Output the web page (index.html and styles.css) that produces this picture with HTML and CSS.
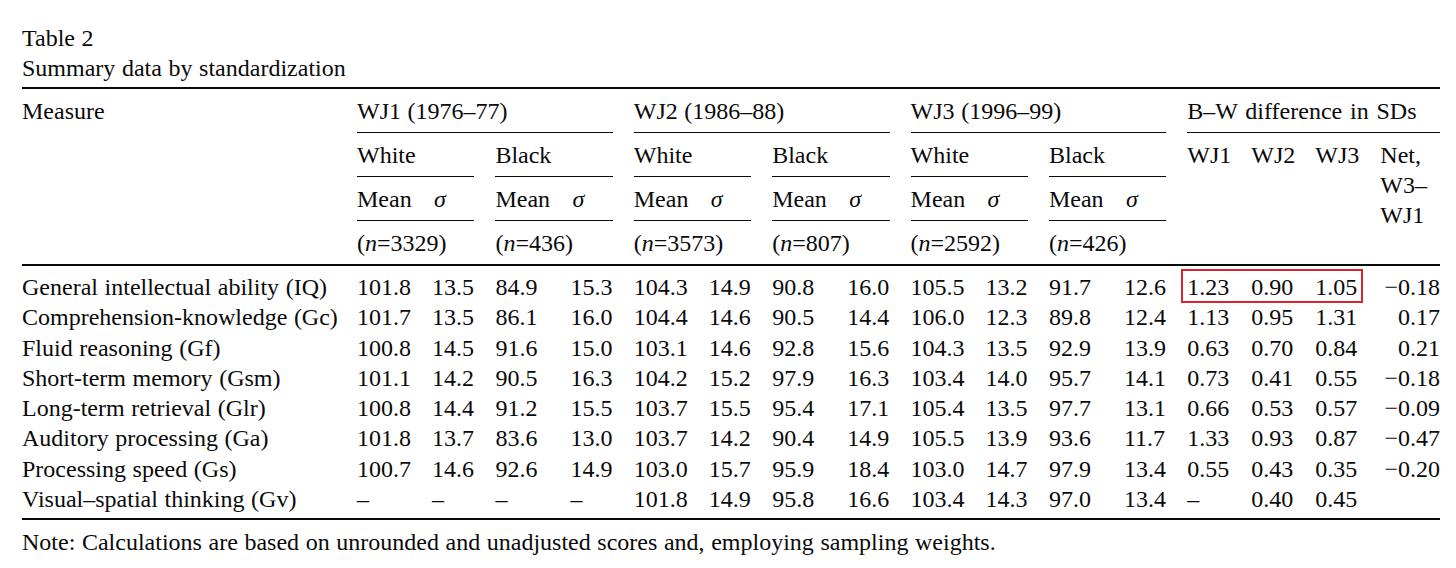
FILE: index.html
```html
<!DOCTYPE html>
<html lang="en">
<head>
<meta charset="utf-8">
<title>Table 2</title>
<link rel="stylesheet" href="styles.css">
</head>
<body>
<div class="page">
  <div class="caption">
    <div>Table 2</div>
    <div>Summary data by standardization</div>
  </div>

  <div class="head grid">
    <div class="hc measure">Measure</div>
    <div class="hc ul g1">WJ1 (1976–77)</div>
    <div class="hc ul g2">WJ2 (1986–88)</div>
    <div class="hc ul g3">WJ3 (1996–99)</div>
    <div class="hc ul g4 wide">B–W difference in SDs</div>

    <div class="hc ul r2 c2">White</div>
    <div class="hc ul r2 c3">Black</div>
    <div class="hc ul r2 c4">White</div>
    <div class="hc ul r2 c5">Black</div>
    <div class="hc ul r2 c6">White</div>
    <div class="hc ul r2 c7">Black</div>
    <div class="hc r2 c8">WJ1</div>
    <div class="hc r2 c9">WJ2</div>
    <div class="hc r2 c10">WJ3</div>
    <div class="hc net">Net,<br>W3–<br>WJ1</div>

    <div class="hc ul r3 c2 pair"><span class="m">Mean</span><i class="sig">σ</i></div>
    <div class="hc ul r3 c3 pair"><span class="m">Mean</span><i class="sig">σ</i></div>
    <div class="hc ul r3 c4 pair"><span class="m">Mean</span><i class="sig">σ</i></div>
    <div class="hc ul r3 c5 pair"><span class="m">Mean</span><i class="sig">σ</i></div>
    <div class="hc ul r3 c6 pair"><span class="m">Mean</span><i class="sig">σ</i></div>
    <div class="hc ul r3 c7 pair"><span class="m">Mean</span><i class="sig">σ</i></div>

    <div class="hc r4 c2">(<i>n</i>=3329)</div>
    <div class="hc r4 c3">(<i>n</i>=436)</div>
    <div class="hc r4 c4">(<i>n</i>=3573)</div>
    <div class="hc r4 c5">(<i>n</i>=807)</div>
    <div class="hc r4 c6">(<i>n</i>=2592)</div>
    <div class="hc r4 c7">(<i>n</i>=426)</div>
  </div>

  <div class="body">
    <div class="row grid hl">
      <div class="lab">General intellectual ability (IQ)</div>
      <div class="pair"><span class="m">101.8</span><span>13.5</span></div>
      <div class="pair"><span class="m">84.9</span><span>15.3</span></div>
      <div class="pair"><span class="m">104.3</span><span>14.9</span></div>
      <div class="pair"><span class="m">90.8</span><span>16.0</span></div>
      <div class="pair"><span class="m">105.5</span><span>13.2</span></div>
      <div class="pair"><span class="m">91.7</span><span>12.6</span></div>
      <div>1.23</div><div>0.90</div><div>1.05</div><div class="nv">−0.18</div>
      <div class="mark"></div>
    </div>
    <div class="row grid">
      <div class="lab">Comprehension-knowledge (Gc)</div>
      <div class="pair"><span class="m">101.7</span><span>13.5</span></div>
      <div class="pair"><span class="m">86.1</span><span>16.0</span></div>
      <div class="pair"><span class="m">104.4</span><span>14.6</span></div>
      <div class="pair"><span class="m">90.5</span><span>14.4</span></div>
      <div class="pair"><span class="m">106.0</span><span>12.3</span></div>
      <div class="pair"><span class="m">89.8</span><span>12.4</span></div>
      <div>1.13</div><div>0.95</div><div>1.31</div><div class="nv">0.17</div>
    </div>
    <div class="row grid">
      <div class="lab">Fluid reasoning (Gf)</div>
      <div class="pair"><span class="m">100.8</span><span>14.5</span></div>
      <div class="pair"><span class="m">91.6</span><span>15.0</span></div>
      <div class="pair"><span class="m">103.1</span><span>14.6</span></div>
      <div class="pair"><span class="m">92.8</span><span>15.6</span></div>
      <div class="pair"><span class="m">104.3</span><span>13.5</span></div>
      <div class="pair"><span class="m">92.9</span><span>13.9</span></div>
      <div>0.63</div><div>0.70</div><div>0.84</div><div class="nv">0.21</div>
    </div>
    <div class="row grid">
      <div class="lab">Short-term memory (Gsm)</div>
      <div class="pair"><span class="m">101.1</span><span>14.2</span></div>
      <div class="pair"><span class="m">90.5</span><span>16.3</span></div>
      <div class="pair"><span class="m">104.2</span><span>15.2</span></div>
      <div class="pair"><span class="m">97.9</span><span>16.3</span></div>
      <div class="pair"><span class="m">103.4</span><span>14.0</span></div>
      <div class="pair"><span class="m">95.7</span><span>14.1</span></div>
      <div>0.73</div><div>0.41</div><div>0.55</div><div class="nv">−0.18</div>
    </div>
    <div class="row grid">
      <div class="lab">Long-term retrieval (Glr)</div>
      <div class="pair"><span class="m">100.8</span><span>14.4</span></div>
      <div class="pair"><span class="m">91.2</span><span>15.5</span></div>
      <div class="pair"><span class="m">103.7</span><span>15.5</span></div>
      <div class="pair"><span class="m">95.4</span><span>17.1</span></div>
      <div class="pair"><span class="m">105.4</span><span>13.5</span></div>
      <div class="pair"><span class="m">97.7</span><span>13.1</span></div>
      <div>0.66</div><div>0.53</div><div>0.57</div><div class="nv">−0.09</div>
    </div>
    <div class="row grid">
      <div class="lab">Auditory processing (Ga)</div>
      <div class="pair"><span class="m">101.8</span><span>13.7</span></div>
      <div class="pair"><span class="m">83.6</span><span>13.0</span></div>
      <div class="pair"><span class="m">103.7</span><span>14.2</span></div>
      <div class="pair"><span class="m">90.4</span><span>14.9</span></div>
      <div class="pair"><span class="m">105.5</span><span>13.9</span></div>
      <div class="pair"><span class="m">93.6</span><span>11.7</span></div>
      <div>1.33</div><div>0.93</div><div>0.87</div><div class="nv">−0.47</div>
    </div>
    <div class="row grid">
      <div class="lab">Processing speed (Gs)</div>
      <div class="pair"><span class="m">100.7</span><span>14.6</span></div>
      <div class="pair"><span class="m">92.6</span><span>14.9</span></div>
      <div class="pair"><span class="m">103.0</span><span>15.7</span></div>
      <div class="pair"><span class="m">95.9</span><span>18.4</span></div>
      <div class="pair"><span class="m">103.0</span><span>14.7</span></div>
      <div class="pair"><span class="m">97.9</span><span>13.4</span></div>
      <div>0.55</div><div>0.43</div><div>0.35</div><div class="nv">−0.20</div>
    </div>
    <div class="row grid">
      <div class="lab">Visual–spatial thinking (Gv)</div>
      <div class="pair"><span class="m">–</span><span>–</span></div>
      <div class="pair"><span class="m">–</span><span>–</span></div>
      <div class="pair"><span class="m">101.8</span><span>14.9</span></div>
      <div class="pair"><span class="m">95.8</span><span>16.6</span></div>
      <div class="pair"><span class="m">103.4</span><span>14.3</span></div>
      <div class="pair"><span class="m">97.0</span><span>13.4</span></div>
      <div>–</div><div>0.40</div><div>0.45</div><div class="nv"></div>
    </div>
  </div>

  <div class="note">Note: Calculations are based on unrounded and unadjusted scores and, employing sampling weights.</div>
</div>
</body>
</html>
```

FILE: styles.css
```css
html, body {
  margin: 0;
  padding: 0;
  background: #ffffff;
}

body {
  font-family: "Liberation Serif", "Times New Roman", serif;
  font-size: 24px;
  word-spacing: 0.6px;
  color: #0a0a0a;
}

.page {
  width: 1418px;
  padding: 23px 0 0 22px;
}

.caption {
  line-height: 30px;
  white-space: nowrap;
}

.grid {
  display: grid;
  grid-template-columns: 314px repeat(6, 117.4px) repeat(3, 43px) 1fr;
  column-gap: 21px;
  white-space: nowrap;
}

.head {
  margin-top: 4px;
  border-top: 2px solid #0a0a0a;
  border-bottom: 2px solid #0a0a0a;
  grid-template-rows: 44px 44px 44px 43px;
}

.hc {
  padding: 7px 0 6px;
  line-height: 30px;
}

.ul {
  border-bottom: 1px solid #0a0a0a;
}

.wide {
  word-spacing: 1.8px;
}

.measure { grid-column: 1; grid-row: 1; }
.g1 { grid-column: 2 / 4; grid-row: 1; }
.g2 { grid-column: 4 / 6; grid-row: 1; }
.g3 { grid-column: 6 / 8; grid-row: 1; }
.g4 { grid-column: 8 / 12; grid-row: 1; }

.r2 { grid-row: 2; }
.r3 { grid-row: 3; }
.r4 { grid-row: 4; }
.c2 { grid-column: 2; }
.c3 { grid-column: 3; }
.c4 { grid-column: 4; }
.c5 { grid-column: 5; }
.c6 { grid-column: 6; }
.c7 { grid-column: 7; }
.c8 { grid-column: 8; }
.c9 { grid-column: 9; }
.c10 { grid-column: 10; }

.net {
  grid-column: 11;
  grid-row: 2 / 5;
  padding-left: 1px;
}

.pair {
  display: flex;
}

.pair .m {
  width: 75px;
  flex: none;
}

.sig {
  padding-left: 2px;
}

.body {
  padding: 6px 0 4px;
  border-bottom: 2px solid #0a0a0a;
}

.row {
  line-height: 30.25px;
  height: 30.25px;
}

.nv {
  text-align: right;
}

.hl {
  position: relative;
}

.mark {
  position: absolute;
  grid-column: 8 / 11;
  grid-row: 1;
  top: -3px;
  bottom: -1px;
  left: -6px;
  right: -5px;
  border: 2px solid #d8262f;
}

.note {
  margin-top: 7px;
  line-height: 30px;
  white-space: nowrap;
}
```
